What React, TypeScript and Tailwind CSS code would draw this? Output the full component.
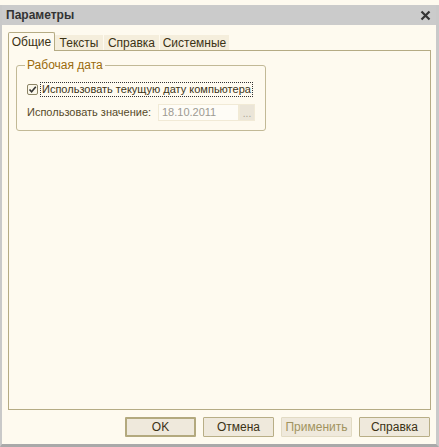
const font = { fontFamily: '"Liberation Sans", Arial, sans-serif' }

const tabs = [
  { t: 'Общие', w: 'w-[47px]' },
  { t: 'Тексты', w: 'w-[49px]' },
  { t: 'Справка', w: 'w-[56px]' },
  { t: 'Системные', w: 'w-[70px]' },
]

function Btn({ label, primary, disabled }: { label: string; primary?: boolean; disabled?: boolean }) {
  return (
    <button
      className={
        'h-[20px] w-[71px] bg-[#efe9dc] text-[12px] leading-none rounded-[1px] ' +
        (primary
          ? 'border-2 border-[#b3a97e] text-[#3b3215]'
          : disabled
            ? 'border border-[#e2dbc4] text-[#a1935e]'
            : 'border border-[#b8ae86] text-[#3b3215]')
      }
    >
      {label}
    </button>
  )
}

export default function App() {
  return (
    <div className="w-[439px] h-[447px] bg-[#fefaef] pt-[5px] flex flex-col" style={font}>
      <div className="flex-1 flex flex-col border-l-2 border-r-[3px] border-b-[3px] border-[#c9c9c9] border-b-[#a9a9a9]">
        {/* title bar */}
        <div className="h-[20px] bg-[#cbcbcb] flex items-center justify-between pl-[4px] pr-[5px]">
          <span className="text-[12px] font-bold text-[#333333]">Параметры</span>
          <svg width="11" height="11" viewBox="0 0 11 11">
            <path d="M1.5 1.5 L9.5 9.5 M9.5 1.5 L1.5 9.5" stroke="#333" strokeWidth="2.2" />
          </svg>
        </div>

        <div className="flex-1 flex flex-col pl-[6px] pr-[5px] pt-[7px] pb-[7px]">
          {/* tabs */}
          <div className="flex items-end h-[18px]">
            {tabs.map((x, i) =>
              i === 0 ? (
                <div
                  key={x.t}
                  className={x.w + ' h-[19px] border border-b-0 border-[#b5ab84] bg-[#fefaef] rounded-t-[2px] text-[12px] text-[#3b3215] flex items-center justify-center relative top-px z-10'}
                >
                  {x.t}
                </div>
              ) : (
                <div
                  key={x.t}
                  className={x.w + ' h-[15px] bg-[#f5eedc] text-[12px] text-[#3b3215] flex items-center justify-center border-r border-[#fefaef]'}
                >
                  {x.t}
                </div>
              )
            )}
          </div>

          {/* panel */}
          <div className="flex-1 border border-[#b5ab84] pl-[7px] pt-[7px]">
            <fieldset className="w-[250px] h-[73px] border border-[#c2b996] rounded-[3px] pl-[10px] m-0">
              <legend className="text-[12px] text-[#9a6b0c] px-[2px] ml-[-2px] leading-[14px]">Рабочая дата</legend>
              <div className="flex items-center gap-[2px] mt-[10px] whitespace-nowrap">
                <div className="w-[11px] h-[11px] border border-[#8c8466] rounded-[2px] bg-[#fbf7ea] flex items-center justify-center">
                  <svg width="9" height="9" viewBox="0 0 9 9">
                    <path d="M1.5 4.5 L3.6 6.8 L7.8 1.8" stroke="#333" strokeWidth="1.6" fill="none" />
                  </svg>
                </div>
                <span className="text-[11px] text-[#3b3215] border border-dotted border-[#333] px-px leading-[13px]">
                  Использовать текущую дату компьютера
                </span>
              </div>
              <div className="flex items-center mt-[7px] whitespace-nowrap">
                <span className="text-[11px] text-[#574a2a] w-[131px]">Использовать значение:</span>
                <div className="w-[81px] h-[17px] bg-[#fefcf6] border border-[#f1ead6] text-[11px] text-[#9c9a92] flex items-center pl-[3px]">
                  18.10.2011
                </div>
                <div className="w-[16px] h-[17px] bg-[#ebe5d8] border border-[#f1ead6] text-[10px] text-[#a9a397] flex items-end justify-center leading-[12px]">
                  ...
                </div>
              </div>
            </fieldset>
          </div>

          {/* buttons */}
          <div className="flex justify-end gap-[7px] mt-[7px] pr-px">
            <Btn label="OK" primary />
            <Btn label="Отмена" />
            <Btn label="Применить" disabled />
            <Btn label="Справка" />
          </div>
        </div>
      </div>
    </div>
  )
}
